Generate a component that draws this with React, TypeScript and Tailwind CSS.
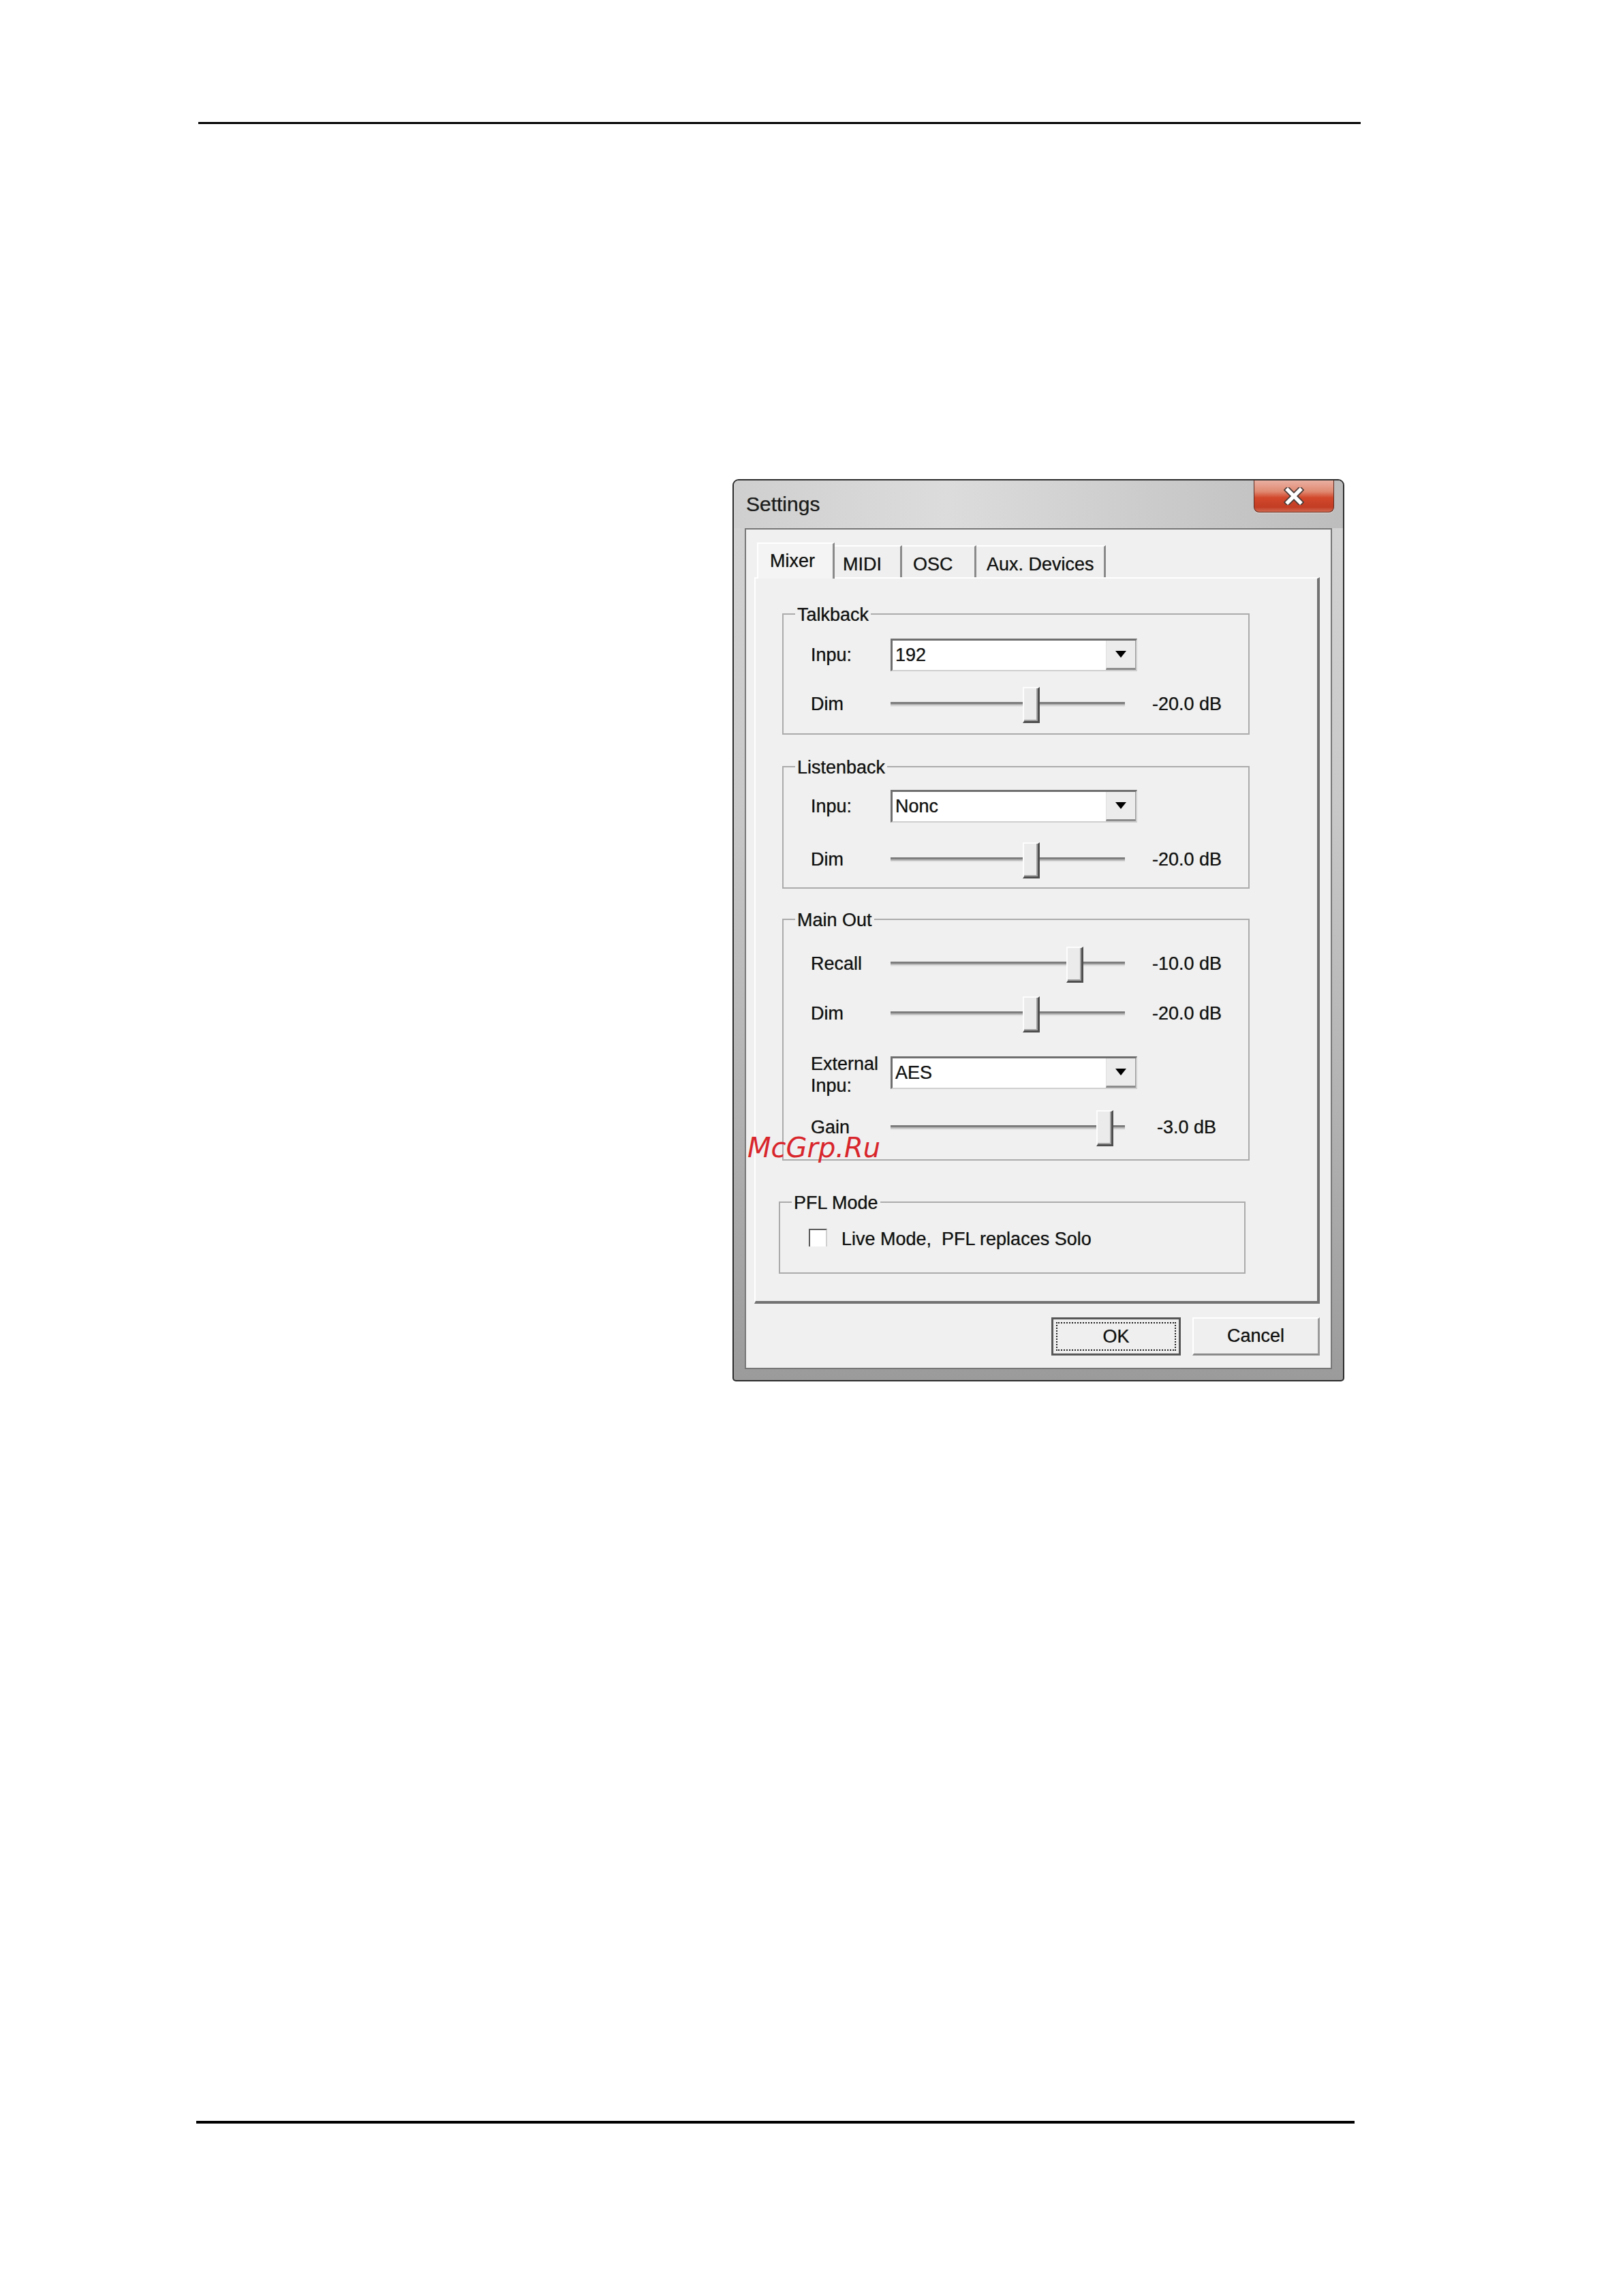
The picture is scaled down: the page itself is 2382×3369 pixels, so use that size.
import React from "react";

type SliderProps = { thumb: string };

// Horizontal trackbar: sunken groove with a raised rectangular thumb
function Slider({ thumb }: SliderProps) {
  return (
    <div className="relative flex h-[54px] w-[344px] items-center">
      <div className="h-[7px] w-full border-t-[3px] border-b-2 border-t-[#7d7d7d] border-b-[#e2e2e2] bg-[#b8b8b8]" />
      <div
        className={`absolute top-[2px] h-[53px] w-[25px] border-t-2 border-l-2 border-r-[3px] border-b-[3px] border-t-[#fdfdfd] border-l-[#fdfdfd] border-r-[#4e4e4e] border-b-[#4e4e4e] bg-[#ebebeb] shadow-[inset_-2px_-2px_0_#a3a3a3] ${thumb}`}
      />
    </div>
  );
}

// Drop-down list box with a value and arrow button
function Combo({ value }: { value: string }) {
  return (
    <div className="flex h-[48px] w-[362px] border-t-[3px] border-l-[3px] border-r-2 border-b-2 border-t-[#6f6f6f] border-l-[#6f6f6f] border-r-[#cfcfcf] border-b-[#cfcfcf] bg-white">
      <div className="flex flex-1 items-center pl-[4px] text-[27px] leading-none text-[#111]">{value}</div>
      <div className="flex w-[44px] items-center justify-center border-l border-b-[3px] border-r border-l-[#e0e0e0] border-b-[#8c8c8c] border-r-[#9a9a9a] bg-[#ececec]">
        <div className="h-0 w-0 border-l-[8px] border-r-[8px] border-t-[10px] border-l-transparent border-r-transparent border-t-black" />
      </div>
    </div>
  );
}

function Label({ children }: { children: React.ReactNode }) {
  return <div className="w-[117px] text-[27px] leading-none text-[#111]">{children}</div>;
}

function Value({ children }: { children: React.ReactNode }) {
  return <div className="ml-[40px] text-[27px] leading-none text-[#111]">{children}</div>;
}

function GroupTitle({ children }: { children: React.ReactNode }) {
  return (
    <div className="absolute left-[17px] top-0 -translate-y-1/2 bg-[#f0f0f0] px-[3px] text-[27px] leading-[30px] text-[#111]">
      {children}
    </div>
  );
}

function CloseGlyph() {
  return (
    <svg width="30" height="26" viewBox="0 0 30 26">
      <path d="M6 4 L24 22 M24 4 L6 22" stroke="#4a3a36" strokeWidth="9" strokeLinecap="square" />
      <path d="M6 4 L24 22 M24 4 L6 22" stroke="#ffffff" strokeWidth="5.5" strokeLinecap="square" />
    </svg>
  );
}

export default function App() {
  return (
    <div className="relative h-[3369px] w-[2382px] overflow-hidden bg-white pt-[179px] font-['Liberation_Sans',Arial,sans-serif]">
      {/* page header rule */}
      <div className="ml-[291px] h-[3px] w-[1706px] bg-black" />

      {/* Settings dialog */}
      <div className="ml-[1075px] mt-[521px] flex h-[1324px] w-[898px] flex-col rounded-t-[9px] rounded-b-[5px] border-2 border-[#2c2c2c] bg-[linear-gradient(to_bottom,#d4d4d4_0%,#c9c9c9_35%,#b2b2b2_70%,#9b9b9b_100%)] [text-shadow:0_0_0.8px_rgba(0,0,0,0.55)]">
        {/* title bar */}
        <div className="flex h-[70px] items-start justify-between rounded-t-[7px] bg-[linear-gradient(to_right,#cfcfcf_0%,#dcdcdc_35%,#cdcdcd_65%,#bdbdbd_100%)] pl-[18px] pr-[13px]">
          <div className="mt-[17px] text-[30px] leading-[36px] text-[#1c1c1c]">Settings</div>
          <div className="flex h-[47px] w-[118px] items-center justify-center rounded-b-[8px] border border-t-0 border-[#5a2a20] bg-[linear-gradient(to_bottom,#eab0a2_0%,#e08a72_35%,#d2482c_55%,#c23d24_85%,#d36a52_100%)] shadow-[0_1px_0_#f4e6e2] [text-shadow:none]">
            <CloseGlyph />
          </div>
        </div>

        {/* client area */}
        <div className="mx-[16px] flex h-[1234px] flex-col border-2 border-[#777777] bg-[#f0f0f0] pl-[12px] pr-[16px] pt-[19px]">
          {/* tab strip */}
          <div className="flex h-[51px] items-end pl-[4px] text-[27px] leading-[30px] text-[#111]">
            <div className="relative z-10 -mb-[2px] h-[53px] w-[114px] border-t-2 border-l-2 border-r-[3px] border-t-white border-l-white border-r-[#8a8a8a] bg-[#f4f4f4] pl-[17px] pt-[10px]">
              Mixer
            </div>
            <div className="h-[47px] w-[99px] border-t-2 border-r-[3px] border-t-white border-r-[#8a8a8a] bg-[#efefef] pl-[12px] pt-[11px]">
              MIDI
            </div>
            <div className="h-[47px] w-[109px] border-t-2 border-r-[3px] border-t-white border-r-[#8a8a8a] bg-[#efefef] pl-[16px] pt-[11px]">
              OSC
            </div>
            <div className="h-[47px] w-[190px] border-t-2 border-r-[3px] border-t-white border-r-[#8a8a8a] bg-[#efefef] pl-[15px] pt-[11px]">
              Aux. Devices
            </div>
          </div>

          {/* tab page */}
          <div className="flex h-[1066px] flex-col border-t-2 border-l-2 border-r-[4px] border-b-[4px] border-t-white border-l-white border-r-[#727272] border-b-[#727272] bg-[#f0f0f0]">
            {/* Talkback */}
            <div className="relative ml-[39px] mt-[51px] flex h-[178px] w-[686px] flex-col border-2 border-[#ababab] pl-[40px] pt-[35px]">
              <GroupTitle>Talkback</GroupTitle>
              <div className="flex h-[48px] items-center">
                <Label>Inpu:</Label>
                <Combo value="192" />
              </div>
              <div className="mt-[21px] flex h-[54px] items-center">
                <Label>Dim</Label>
                <Slider thumb="left-[194px]" />
                <Value>-20.0 dB</Value>
              </div>
            </div>

            {/* Listenback */}
            <div className="relative ml-[39px] mt-[46px] flex h-[180px] w-[686px] flex-col border-2 border-[#ababab] pl-[40px] pt-[33px]">
              <GroupTitle>Listenback</GroupTitle>
              <div className="flex h-[48px] items-center">
                <Label>Inpu:</Label>
                <Combo value="Nonc" />
              </div>
              <div className="mt-[27px] flex h-[54px] items-center">
                <Label>Dim</Label>
                <Slider thumb="left-[194px]" />
                <Value>-20.0 dB</Value>
              </div>
            </div>

            {/* Main Out */}
            <div className="relative ml-[39px] mt-[44px] flex h-[355px] w-[686px] flex-col border-2 border-[#ababab] pl-[40px] pt-[37px]">
              <GroupTitle>Main Out</GroupTitle>
              <div className="flex h-[54px] items-center">
                <Label>Recall</Label>
                <Slider thumb="left-[258px]" />
                <Value>-10.0 dB</Value>
              </div>
              <div className="mt-[19px] flex h-[54px] items-center">
                <Label>Dim</Label>
                <Slider thumb="left-[194px]" />
                <Value>-20.0 dB</Value>
              </div>
              <div className="mt-[36px] flex h-[48px] items-start">
                <div className="-mt-[5px] w-[117px] text-[27px] leading-[32px] text-[#111]">
                  External
                  <br />
                  Inpu:
                </div>
                <Combo value="AES" />
              </div>
              <div className="mt-[29px] flex h-[54px] items-center">
                <Label>Gain</Label>
                <Slider thumb="left-[302px]" />
                <div className="ml-[47px] text-[27px] leading-none text-[#111]">-3.0 dB</div>
              </div>
            </div>

            {/* PFL Mode */}
            <div className="relative ml-[34px] mt-[60px] flex h-[106px] w-[685px] flex-col border-2 border-[#ababab] pl-[42px] pt-[35px]">
              <GroupTitle>PFL Mode</GroupTitle>
              <div className="flex h-[32px] items-start">
                <div className="mt-[3px] h-[26px] w-[27px] border-t-2 border-l-2 border-r-2 border-t-[#5a5a5a] border-l-[#5a5a5a] border-r-[#d0d0d0] bg-white" />
                <div className="ml-[21px] mt-[5px] text-[27px] leading-[27px] text-[#111]">Live Mode,&nbsp; PFL replaces Solo</div>
              </div>
            </div>
          </div>

          {/* dialog buttons */}
          <div className="mt-[20px] flex h-[56px] justify-end gap-[17px] text-[27px] leading-none text-[#111]">
            <div className="flex w-[190px] items-center justify-center border-[3px] border-[#575757] bg-[#efefef] p-[4px]">
              <div className="flex h-full w-full items-center justify-center border-2 border-dotted border-[#222]">OK</div>
            </div>
            <div className="flex w-[187px] items-center justify-center border-t-2 border-l-2 border-r-[3px] border-b-[3px] border-t-white border-l-white border-r-[#9a9a9a] border-b-[#8a8a8a] bg-[#efefef]">
              Cancel
            </div>
          </div>
        </div>
      </div>

      {/* page footer rule */}
      <div className="ml-[288px] mt-[1085px] h-[4px] w-[1700px] bg-black" />

      {/* site stamp over the dialog */}
      <div className="absolute left-[1097px] top-[1664px] font-['DejaVu_Sans',sans-serif] text-[40px] italic leading-none text-[#d8262c]">
        McGrp.Ru
      </div>
    </div>
  );
}
